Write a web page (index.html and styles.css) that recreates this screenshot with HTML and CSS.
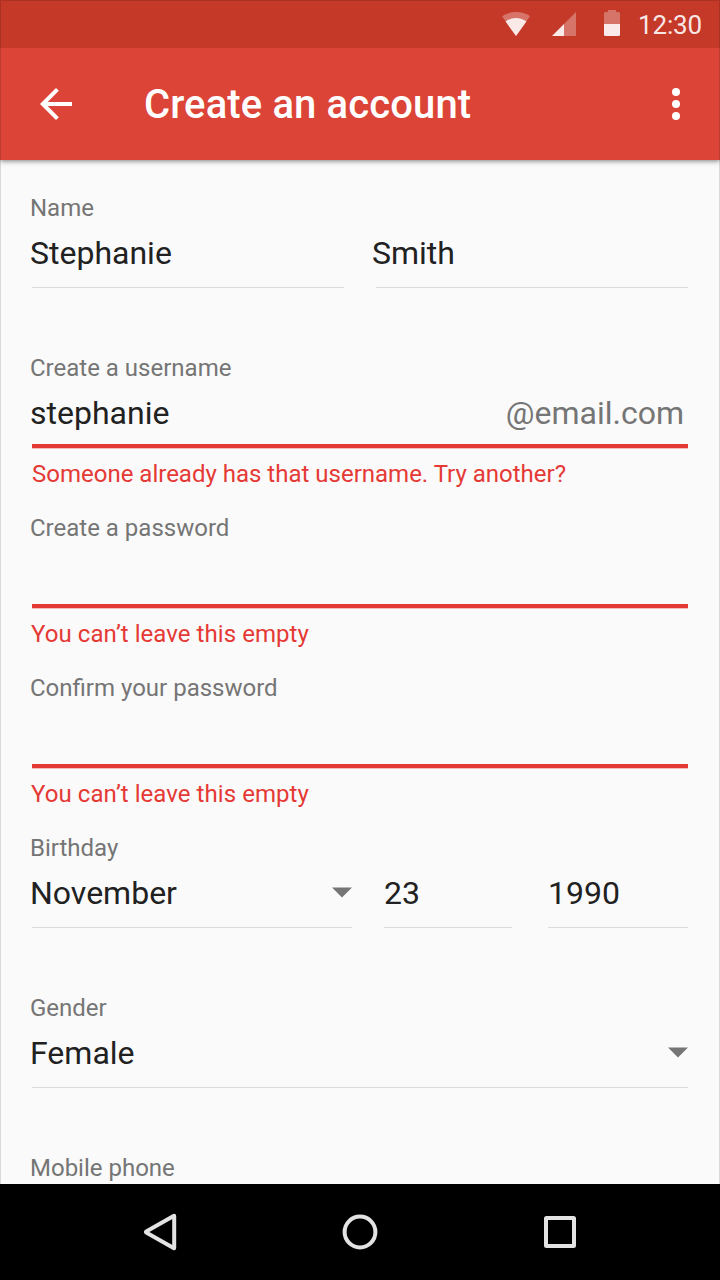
FILE: index.html
```html
<!DOCTYPE html>
<html lang="en">
<head>
<meta charset="utf-8">
<title>Create an account</title>
<link rel="stylesheet" href="styles.css">
</head>
<body>
<div class="screen">
  <div class="status-bar">
    <svg class="status-icons" width="120" height="28" viewBox="0 0 120 28" fill="#fff">
      <path fill-opacity=".3" d="M2 6.2Q8 2 16 2t14 4.200L16 26z"/>
      <path fill-opacity=".85" d="M5.600 11.600Q10 8 16 8t10.400 3.600L16 26z"/>
      <path fill-opacity=".3" d="M76 2v24H64V14z"/>
      <path fill-opacity=".9" d="M64 14v12H52z"/>
      <path fill-opacity=".3" d="M104 14V3.500Q104 2 105.500 2H108V0h8v2h2.500Q120 2 120 3.500V14z"/>
      <path fill-opacity=".9" d="M104 14h16v10.500q0 1.500-1.500 1.500h-13q-1.500 0-1.500-1.500z"/>
    </svg>
    <span class="clock">12:30</span>
  </div>
  <header class="app-bar">
    <svg class="back" width="32" height="32" viewBox="0 0 32 32" fill="none" stroke="#fff" stroke-width="4"><path d="M32 16H4M17.400 1.400L2.800 16l14.600 14.600"/></svg>
    <h1 class="title">Create an account</h1>
    <svg class="more" width="8" height="32" viewBox="0 0 8 32" fill="#fff"><circle cx="4" cy="4" r="4"/><circle cx="4" cy="16" r="4"/><circle cx="4" cy="28" r="4"/></svg>
  </header>
  <main class="form">
    <section class="field">
      <div class="label">Name</div>
      <div class="row names">
        <div class="control">Stephanie</div>
        <div class="control last-name">Smith</div>
      </div>
    </section>
    <section class="field">
      <div class="label">Create a username</div>
      <div class="control invalid"><span>stephanie</span><span class="suffix">@email.com</span></div>
      <div class="error">Someone already has that username. Try another?</div>
    </section>
    <section class="field">
      <div class="label">Create a password</div>
      <div class="control invalid"></div>
      <div class="error empty">You can’t leave this empty</div>
    </section>
    <section class="field">
      <div class="label">Confirm your password</div>
      <div class="control invalid"></div>
      <div class="error empty">You can’t leave this empty</div>
    </section>
    <section class="field">
      <div class="label">Birthday</div>
      <div class="row birthday">
        <div class="control"><span>November</span><svg class="arrow" width="20" height="11" viewBox="0 0 20 11"><path d="M0 .6h20L10 10.600z"/></svg></div>
        <div class="control day">23</div>
        <div class="control year">1990</div>
      </div>
    </section>
    <section class="field">
      <div class="label">Gender</div>
      <div class="control"><span>Female</span><svg class="arrow" width="20" height="11" viewBox="0 0 20 11"><path d="M0 .6h20L10 10.600z"/></svg></div>
    </section>
    <section class="field">
      <div class="label">Mobile phone</div>
    </section>
  </main>
  <nav class="nav-bar">
    <svg width="40" height="40" viewBox="0 0 40 40"><path d="M34.200 4Q34.200 3.600 33.600 4L6.200 19.500q-.6.500 0 1L33.600 36q.6.400.6 0z"/></svg>
    <svg width="40" height="40" viewBox="0 0 40 40"><circle cx="20" cy="20" r="15.400"/></svg>
    <svg width="40" height="40" viewBox="0 0 40 40"><rect x="6" y="6" width="28" height="28" rx=".5"/></svg>
  </nav>
</div>
</body>
</html>
```
FILE: styles.css
```css
body {
  margin: 0;
  font-family: Roboto, sans-serif;
  color: #212121;
}

.screen {
  position: relative;
  display: flex;
  flex-direction: column;
  width: 720px;
  height: 1280px;
  overflow: hidden;
  background: #fafafa;
}

/* Hairline frame drawn over all the content above the navigation bar */
.screen::after {
  content: "";
  position: absolute;
  z-index: 3;
  inset: 0 0 96px;
  border: 1px solid rgba(0, 0, 0, .13);
  border-bottom: 0;
  pointer-events: none;
}

.status-bar {
  z-index: 2;
  display: flex;
  flex: none;
  justify-content: flex-end;
  height: 48px;
  box-sizing: border-box;
  padding: 10px 18px 0 0;
  background: #c53929;
}

.clock {
  width: 64px;
  margin-left: 18px;
  font-size: 26px;
  line-height: 30px;
  letter-spacing: -.15px;
  color: rgba(255, 255, 255, .9);
}

.app-bar {
  z-index: 1;
  display: flex;
  flex: none;
  align-items: center;
  height: 112px;
  box-sizing: border-box;
  padding: 0 40px;
  background: #db4437;
  box-shadow: 0 1px 5px rgba(0, 0, 0, .5);
}

.title {
  flex: 1;
  margin: 2px 0 0 72px;
  font-size: 40px;
  font-weight: 500;
  line-height: 48px;
  letter-spacing: .12px;
  color: #fff;
}

.form {
  flex: 1;
  min-height: 0;
  overflow: hidden;
  padding: 32px 32px 0;
}

.field {
  height: 160px;
}

.label {
  margin-left: -2px;
  font-size: 24px;
  line-height: 32px;
  color: #757575;
}

.row {
  display: grid;
}

.names {
  grid-template-columns: 312px 312px;
  gap: 32px;
}

.birthday {
  grid-template-columns: 352px 164px 140px;
}

.birthday .control:first-child {
  margin-right: 32px;
}

.control {
  display: flex;
  justify-content: space-between;
  height: 64px;
  box-sizing: border-box;
  border-bottom: 1px solid #dadada;
  font-size: 32px;
  line-height: 58px;
  text-indent: -2px;
}

.last-name {
  text-indent: -4px;
}

.day,
.year {
  text-indent: 0;
}

.day {
  margin-right: 36px;
}

.invalid {
  border-bottom: 4px solid #e53935;
  box-shadow: 0 1px 0 rgba(229, 57, 53, .3);
}

.suffix {
  padding-right: 4px;
  text-indent: 0;
  color: #757575;
}

.arrow {
  margin-top: 23px;
  fill: #757575;
}

.error {
  margin-top: 10px;
  font-size: 24px;
  line-height: 32px;
  color: #e53935;
}

.empty {
  margin-left: -1px;
  letter-spacing: .06px;
}

.nav-bar {
  display: flex;
  flex: none;
  align-items: center;
  justify-content: center;
  gap: 160px;
  height: 96px;
  background: #000;
}

.nav-bar svg {
  fill: none;
  stroke: #e3e3e3;
  stroke-width: 4;
  stroke-linejoin: round;
}
```
